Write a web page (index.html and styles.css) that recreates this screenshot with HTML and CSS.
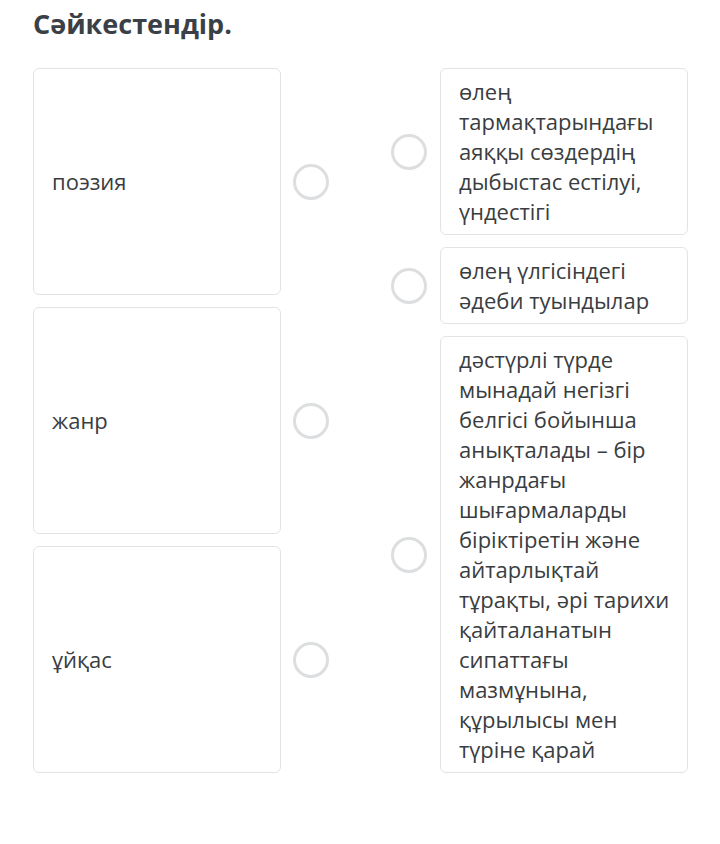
FILE: index.html
```html
<!DOCTYPE html>
<html lang="kk">

<head>
    <meta charset="UTF-8">
    <meta name="viewport" content="width=device-width, initial-scale=1.0">
    <title>Сәйкестендір</title>
    <link rel="stylesheet" href="styles.css">
</head>

<body>

    <div class="page">
        <h1>Сәйкестендір.</h1>

        <div class="match">
            <!-- Left side: terms -->
            <div class="side side-left">
                <div class="row">
                    <div class="card card-term">поэзия</div>
                    <span class="dot"></span>
                </div>
                <div class="row">
                    <div class="card card-term">жанр</div>
                    <span class="dot"></span>
                </div>
                <div class="row">
                    <div class="card card-term">ұйқас</div>
                    <span class="dot"></span>
                </div>
            </div>

            <!-- Right side: definitions -->
            <div class="side side-right">
                <div class="row">
                    <span class="dot"></span>
                    <div class="card">өлең тармақтарындағы аяққы сөздердің дыбыстас естілуі, үндестігі</div>
                </div>
                <div class="row">
                    <span class="dot"></span>
                    <div class="card">өлең үлгісіндегі әдеби туындылар</div>
                </div>
                <div class="row">
                    <span class="dot"></span>
                    <div class="card">дәстүрлі түрде мынадай негізгі белгісі бойынша анықталады – бір жанрдағы шығармаларды біріктіретін және айтарлықтай тұрақты, әрі тарихи қайталанатын сипаттағы мазмұнына, құрылысы мен түріне қарай</div>
                </div>
            </div>
        </div>
    </div>

</body>

</html>
```

FILE: styles.css
```css
body {
    margin: 0;
    padding: 0;
    background-color: #fff;
    font-family: "Open Sans", "Noto Sans", sans-serif;
    color: #3a3d40;
}

.page {
    padding: 6px 32px 40px 33px;
}

h1 {
    margin: 0 0 26px 0;
    font-size: 27px;
    line-height: 36px;
    font-weight: 700;
    color: #3b4046;
}

.match {
    display: flex;
    justify-content: space-between;
    align-items: stretch;
}

.side {
    display: flex;
    flex-direction: column;
    gap: 12px;
}

.row {
    display: flex;
    align-items: center;
}

.side-left .row {
    flex: 1;
    align-items: stretch;
}

.side-left .dot {
    align-self: center;
    margin-left: 12px;
}

.side-right .dot {
    margin-right: 13px;
}

.card {
    box-sizing: border-box;
    width: 248px;
    padding: 7px 15px 8px 18px;
    border: 1px solid #e1e4e7;
    border-radius: 6px;
    font-size: 22px;
    line-height: 30px;
    background-color: #fff;
}

.card-term {
    display: flex;
    align-items: center;
}

.dot {
    box-sizing: border-box;
    flex: none;
    width: 36px;
    height: 36px;
    border: 3px solid #dcdee0;
    border-radius: 50%;
}
```
